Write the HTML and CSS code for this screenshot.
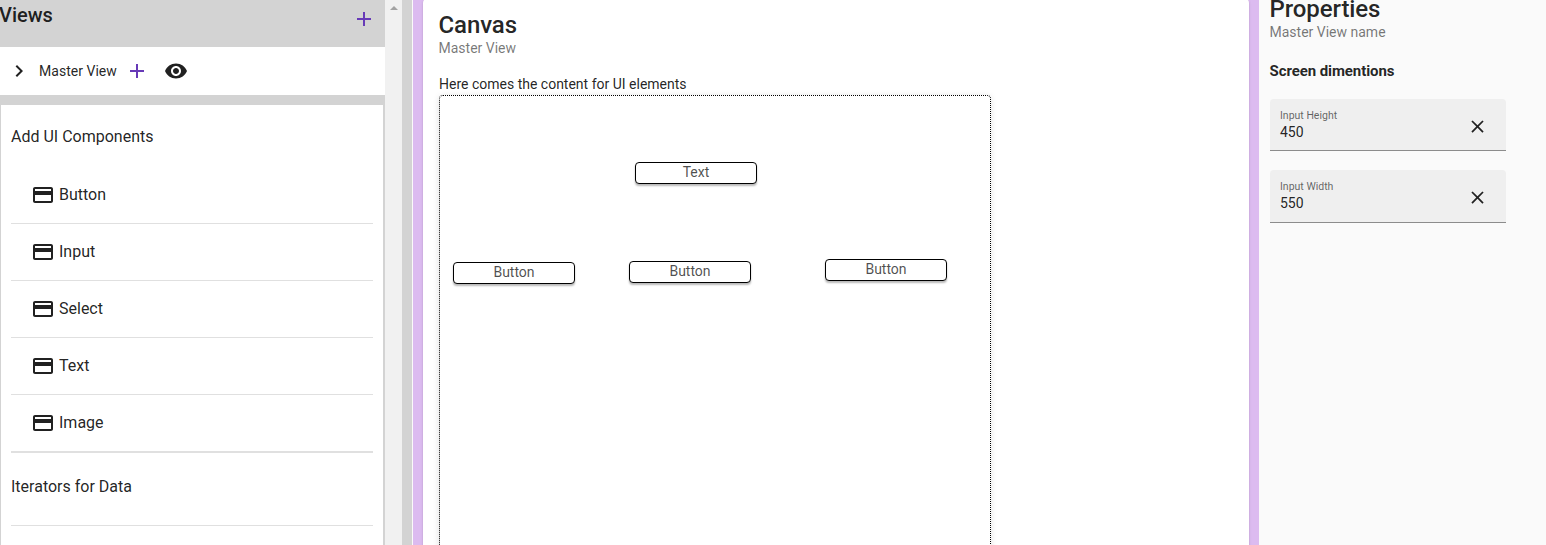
FILE: index.html
```html
<!DOCTYPE html>
<html lang="en">
<head>
<meta charset="utf-8">
<title>UI Builder</title>
<link rel="stylesheet" href="styles.css">
</head>
<body>
<svg width="0" height="0" class="defs">
  <symbol id="card" viewBox="0 0 24 24"><path d="M20 4H4c-1.110 0-1.990.890-1.990 2L2 18c0 1.110.890 2 2 2h16c1.110 0 2-.890 2-2V6c0-1.110-.890-2-2-2zm0 14H4v-6h16v6zm0-10H4V6h16v2z"/></symbol>
  <symbol id="plus" viewBox="0 0 24 24"><path d="M19 13h-6v6h-2v-6H5v-2h6V5h2v6h6v2z"/></symbol>
  <symbol id="close" viewBox="0 0 24 24"><path d="M19 6.410L17.590 5 12 10.590 6.410 5 5 6.410 10.590 12 5 17.590 6.410 19 12 13.410 17.590 19 19 17.590 13.410 12z"/></symbol>
</svg>
<div class="app">
  <aside class="sidebar">
    <header class="views-head"><h2>Views</h2><svg class="add"><use href="#plus"/></svg></header>
    <div class="view-row">
      <svg class="chevron" viewBox="0 0 24 24"><path d="M10 6L8.590 7.410 13.170 12l-4.580 4.590L10 18l6-6z"/></svg>
      <span>Master View</span>
      <svg class="add row-add"><use href="#plus"/></svg>
      <svg class="eye" viewBox="0 0 24 24"><path d="M12 4.500C7 4.500 2.730 7.610 1 12c1.730 4.390 6 7.500 11 7.500s9.270-3.110 11-7.500c-1.730-4.390-6-7.500-11-7.500zM12 17c-2.760 0-5-2.240-5-5s2.240-5 5-5 5 2.240 5 5-2.240 5-5 5zm0-8c-1.660 0-3 1.340-3 3s1.340 3 3 3 3-1.340 3-3-1.340-3-3-3z"/></svg>
    </div>
    <div class="palette">
      <h3>Add UI Components</h3>
      <ul>
        <li><svg><use href="#card"/></svg><span>Button</span></li>
        <li><svg><use href="#card"/></svg><span>Input</span></li>
        <li><svg><use href="#card"/></svg><span>Select</span></li>
        <li><svg><use href="#card"/></svg><span>Text</span></li>
        <li><svg><use href="#card"/></svg><span>Image</span></li>
      </ul>
      <h3 class="iterators">Iterators for Data</h3>
    </div>
  </aside>
  <div class="scrollbar"><i></i></div>
  <div class="gutter"></div>
  <main class="stage">
    <section class="canvas">
      <h1>Canvas</h1>
      <p class="subtitle">Master View</p>
      <p class="hint">Here comes the content for UI elements</p>
      <div class="board">
        <div class="node text-node">Text</div>
        <div class="node node-left">Button</div>
        <div class="node node-mid">Button</div>
        <div class="node node-right">Button</div>
      </div>
    </section>
  </main>
  <aside class="properties">
    <h1>Properties</h1>
    <p class="subtitle">Master View name</p>
    <h4>Screen dimentions</h4>
    <div class="field"><div><label>Input Height</label><span class="value">450</span></div><svg><use href="#close"/></svg></div>
    <div class="field second"><div><label>Input Width</label><span class="value">550</span></div><svg><use href="#close"/></svg></div>
  </aside>
</div>
</body>
</html>
```
FILE: styles.css
```css
* { box-sizing: border-box; margin: 0; padding: 0; }
body { font-family: Roboto, sans-serif; font-size: 14px; color: rgba(0,0,0,.87); overflow: hidden; }
.defs { display: block; }
svg { fill: #212121; flex: none; }
.app { display: flex; height: 545px; overflow: hidden; }
.sidebar { width: 385px; background: #d3d3d3; display: flex; flex-direction: column; }
.views-head { height: 47px; flex: none; display: flex; justify-content: space-between; align-items: flex-start; padding: 3px 9px 0 0; }
h2 { font-size: 20px; font-weight: 500; line-height: 24px; margin-left: -1px; }
.add { fill: #673ab7; width: 24px; height: 24px; margin-top: 4px; }
.view-row { height: 48px; flex: none; background: #fff; display: flex; align-items: center; padding-left: 7px; }
.view-row span { width: 78px; letter-spacing: .03px; padding-bottom: 1px; }
.chevron { width: 24px; height: 24px; margin-right: 8px; }
.row-add { margin: 0 0 0 8px; }
.eye { width: 24px; height: 24px; margin-left: 15px; }
.palette { margin-top: 10px; flex: 1; background: #fff; border-left: 1px solid #d3d3d3; border-right: 2px solid #d3d3d3; padding: 0 10px; }
h3 { font-size: 16px; font-weight: 400; line-height: 64px; height: 62px; }
ul { list-style: none; border-bottom: 1px solid #e0e0e0; }
li { height: 57px; display: flex; align-items: center; border-bottom: 1px solid #e0e0e0; padding-left: 20px; font-size: 16px; }
li span { padding-bottom: 2px; }
li svg { width: 24px; height: 24px; margin-right: 4px; }
.iterators { height: 73px; line-height: 68px; border-bottom: 1px solid #e0e0e0; }
.scrollbar { width: 17px; background: #f1f1f1; display: flex; justify-content: center; padding-top: 6px; }
.scrollbar i { width: 0; height: 0; border: solid transparent; border-width: 0 4px 4px; border-bottom-color: #a3a3a3; }
.gutter { width: 11px; background: #d3d3d3; border-right: 1px solid #fafafa; }
.stage { width: 846px; background: #dcbbf0; padding: 0 10px; }
.canvas { height: 620px; margin-top: -1px; background: #fff; border-radius: 4px; padding: 11px 16px; box-shadow: 0 2px 1px -1px rgba(0,0,0,.2), 0 1px 1px rgba(0,0,0,.14), 0 1px 3px rgba(0,0,0,.12); }
h1 { font-size: 24px; font-weight: 500; line-height: 30px; letter-spacing: -.1px; margin-left: -.5px; }
.subtitle { color: rgba(0,0,0,.54); line-height: 16px; margin-left: -.5px; }
.hint { margin-top: 19px; line-height: 18px; height: 20px; }
.board { position: relative; width: 552px; height: 500px; border: 1px dotted #000; border-radius: 4px; box-shadow: 0 1px 6px rgba(0,0,0,.12); }
.node { position: absolute; width: 122px; height: 22px; border: 1px solid #000; border-radius: 4px; background: #fff; color: rgba(0,0,0,.7); text-align: center; line-height: 18px; box-shadow: 0 2px 2px rgba(0,0,0,.28); }
.text-node { left: 195px; top: 66px; }
.node-left { left: 13px; top: 166px; }
.node-mid { left: 189px; top: 165px; }
.node-right { left: 385px; top: 163px; }
.properties { flex: 1; background: #fafafa; padding: 0 0 0 11px; }
.properties h1 { margin-top: -6px; }
h4 { font-size: 15px; font-weight: 700; line-height: 20px; letter-spacing: -.08px; margin: 21px 0 18px -.5px; }
.field { width: 236px; height: 52px; background: #efefef; border-bottom: 1px solid #8c8c8c; border-radius: 4px 4px 0 0; display: flex; justify-content: space-between; padding: 9px 18px 0 10px; }
.second { margin-top: 19px; height: 53px; }
label { display: block; font-size: 10.5px; line-height: 15px; color: rgba(0,0,0,.6); }
.value { display: block; line-height: 19px; }
.field svg { width: 21px; height: 21px; margin: 8px 0 0; }
```
